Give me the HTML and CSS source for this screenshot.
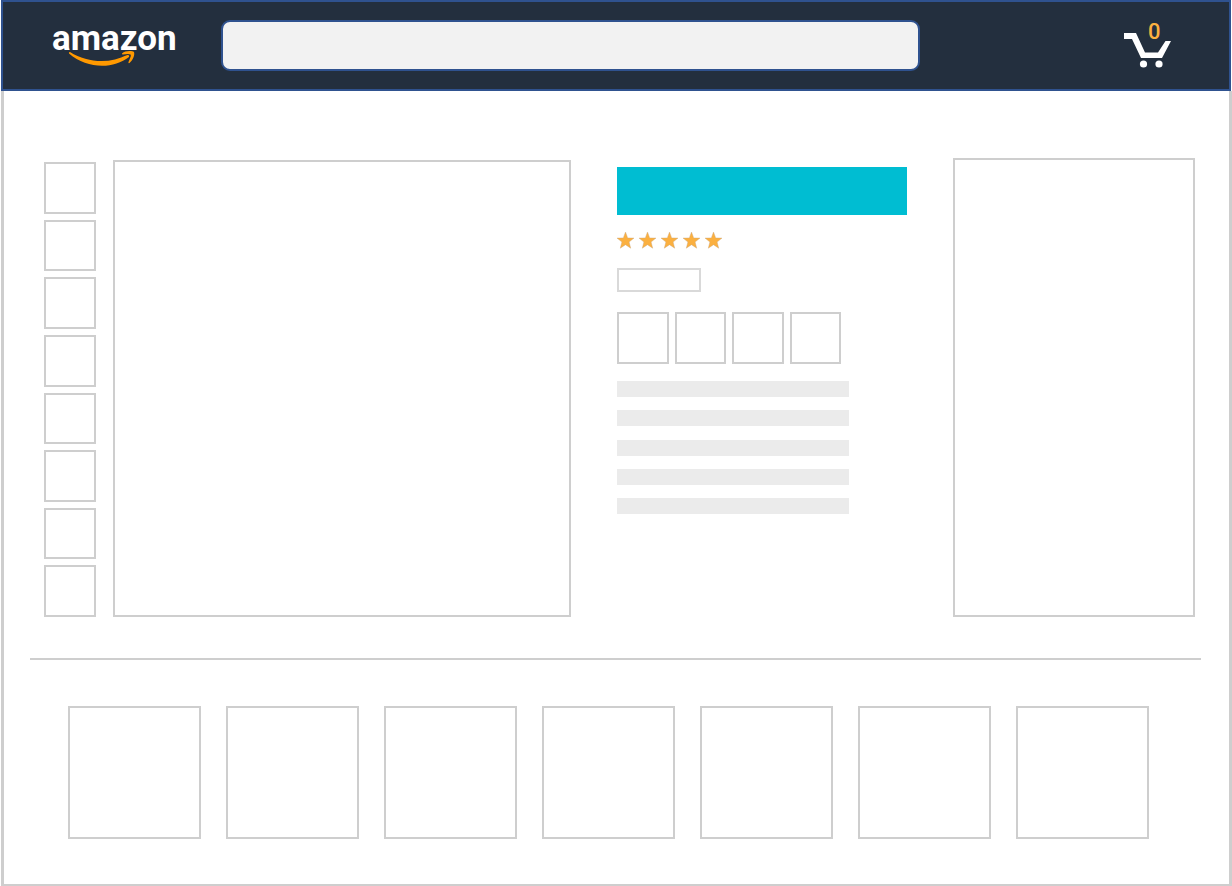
FILE: index.html
```
<!DOCTYPE html>
<html lang="en">
<head>
  <meta charset="UTF-8" />
  <meta name="viewport" content="width=device-width, initial-scale=1.0" />
  <title>Amazon Product Page</title>
  <link rel="stylesheet" href="styles.css">
</head>
<body>
  <header class="topbar">
    <a class="logo" href="#" aria-label="amazon">
      <span class="logo-text">amazon</span>
      <svg class="logo-smile" viewBox="0 0 124 40" aria-hidden="true">
        <path d="M18 24C36 35.500 59 35.500 75 27Q78 26.500 77 29C61 41.500 35 41 17 25.500Q16.500 24 18 24Z" />
        <path class="arrow" d="M70 25.500C73 22.500 80 22.500 82 24C83 27 81 32 77.500 35Q76 35.500 76.500 34C78 30.500 79.500 27.500 78.500 26.500C77 25.500 74 26 71 26.500Q69.500 26.500 70 25.500Z" />
      </svg>
    </a>
    <input class="search" type="text" aria-label="Search" />
    <a class="cart" href="#" aria-label="Cart">
      <svg viewBox="0 0 48 46" aria-hidden="true">
        <path d="M0 10H12L21 29.500H34L41.500 18H47L38 35H17L8 16H0Z" />
        <circle cx="19.500" cy="41" r="3.600" />
        <circle cx="35" cy="41" r="3.600" />
      </svg>
      <span class="cart-count">0</span>
    </a>
  </header>

  <main class="page">
    <section class="product">
      <div class="thumbs">
        <button aria-label="Photo 1"></button>
        <button aria-label="Photo 2"></button>
        <button aria-label="Photo 3"></button>
        <button aria-label="Photo 4"></button>
        <button aria-label="Photo 5"></button>
        <button aria-label="Photo 6"></button>
        <button aria-label="Photo 7"></button>
        <button aria-label="Photo 8"></button>
      </div>
      <div class="photo"></div>

      <div class="info">
        <div class="title"></div>
        <svg class="stars" viewBox="0 0 106 17" role="img" aria-label="5 stars">
          <defs>
            <path id="star" d="M8.500 0L10.700 5.900L17 6.100L12.100 10L13.700 16.200L8.500 12.700L3.300 16.200L4.900 10L0 6.100L6.300 5.900Z" />
          </defs>
          <use href="#star" />
          <use href="#star" x="22" />
          <use href="#star" x="44" />
          <use href="#star" x="66" />
          <use href="#star" x="88" />
        </svg>
        <div class="price"></div>
        <div class="variants">
          <button aria-label="Option 1"></button>
          <button aria-label="Option 2"></button>
          <button aria-label="Option 3"></button>
          <button aria-label="Option 4"></button>
        </div>
        <div class="bullets">
          <div class="line"></div>
          <div class="line"></div>
          <div class="line"></div>
          <div class="line"></div>
          <div class="line"></div>
        </div>
      </div>

      <aside class="buybox"></aside>
    </section>

    <hr class="divider" />

    <section class="related">
      <div class="card"></div>
      <div class="card"></div>
      <div class="card"></div>
      <div class="card"></div>
      <div class="card"></div>
      <div class="card"></div>
      <div class="card"></div>
    </section>
  </main>
</body>
</html>
```
FILE: styles.css
```
:root {
  --navy: #232f3e;
  --blue: #2f528f;
  --line: #cecece;
  --orange: #ff9900;
  --gold: #fbb040;
}
* {
  margin: 0;
  padding: 0;
  box-sizing: border-box;
}
body {
  min-height: 100vh;
  padding-left: 1px;
  display: flex;
  flex-direction: column;
  background: #fff;
  font-family: Roboto, "Liberation Sans", sans-serif;
}
button {
  background: #fff;
  border: 2px solid var(--line);
  cursor: pointer;
}
/* Top bar */
.topbar {
  display: flex;
  align-items: center;
  height: 91px;
  margin-right: 1px;
  padding: 0 57px 0 49px;
  background: var(--navy);
  border: 2px solid var(--blue);
}
.logo {
  position: relative;
  flex: none;
  width: 124px;
  height: 46px;
  margin-right: 45px;
  color: #fff;
  text-decoration: none;
}
.logo-text {
  display: block;
  font-family: Roboto, "Liberation Sans", sans-serif;
  font-size: 35px;
  font-weight: 700;
  line-height: 32px;
}
.logo-smile {
  position: absolute;
  top: 5px;
  left: 0;
  width: 124px;
  height: 40px;
  fill: var(--orange);
}
.logo-smile .arrow {
  stroke: var(--navy);
  stroke-width: 2px;
  paint-order: stroke;
}
.search {
  flex: 0 1 699px;
  min-width: 0;
  height: 51px;
  padding: 0 16px;
  background: #f2f2f2;
  border: 2px solid var(--blue);
  border-radius: 9px;
  font-size: 18px;
}
.cart {
  position: relative;
  flex: none;
  width: 48px;
  height: 46px;
  margin-left: auto;
  text-decoration: none;
}
.cart svg {
  display: block;
  fill: #fff;
}
.cart-count {
  position: absolute;
  top: 0;
  left: 24px;
  color: var(--gold);
  font-size: 22px;
  font-weight: 500;
  line-height: 18px;
}
/* Product area */
.page {
  flex: 1;
  padding-bottom: 45px;
  border: 3px solid var(--line);
  border-top: 0;
  border-bottom-width: 2px;
}
.product {
  display: grid;
  grid-template-columns: 52px 17px 458fr 46px 290fr 46px 242fr;
  padding: 67px 34px 0 40px;
}
.thumbs {
  grid-column: 1;
  display: flex;
  flex-direction: column;
  gap: 6px;
  padding-top: 4px;
}
.thumbs button {
  flex: 1;
}
.photo {
  grid-column: 3;
  aspect-ratio: 458 / 457;
  margin-top: 2px;
  border: 2px solid var(--line);
}
.info {
  grid-column: 5;
  padding-top: 9px;
}
.title {
  height: 48px;
  background: #00bdd2;
}
.stars {
  display: block;
  width: 106px;
  height: 17px;
  margin: 17px 0 19px;
  fill: var(--gold);
  stroke: #c9a77c;
  stroke-width: 0.4;
}
.price {
  width: 84px;
  height: 24px;
  border: 2px solid #d9d9d9;
}
.variants {
  display: grid;
  grid-template-columns: repeat(4, 1fr);
  gap: 6px;
  width: 224px;
  margin: 20px 0 17px;
}
.variants button {
  height: 52px;
}
.bullets {
  display: flex;
  flex-direction: column;
  justify-content: space-between;
  width: 80%;
  height: 133px;
}
.line {
  height: 16px;
  background: #ebebeb;
}
.buybox {
  grid-column: 7;
  border: 2px solid var(--line);
}
/* Related items */
.divider {
  margin: 41px 28px 46px 26px;
  border: 0;
  border-top: 2px solid var(--line);
}
.related {
  display: grid;
  grid-template-columns: repeat(7, 1fr);
  gap: 25px;
  padding: 0 80px 0 64px;
}
.card {
  aspect-ratio: 1;
  border: 2px solid var(--line);
}
```
